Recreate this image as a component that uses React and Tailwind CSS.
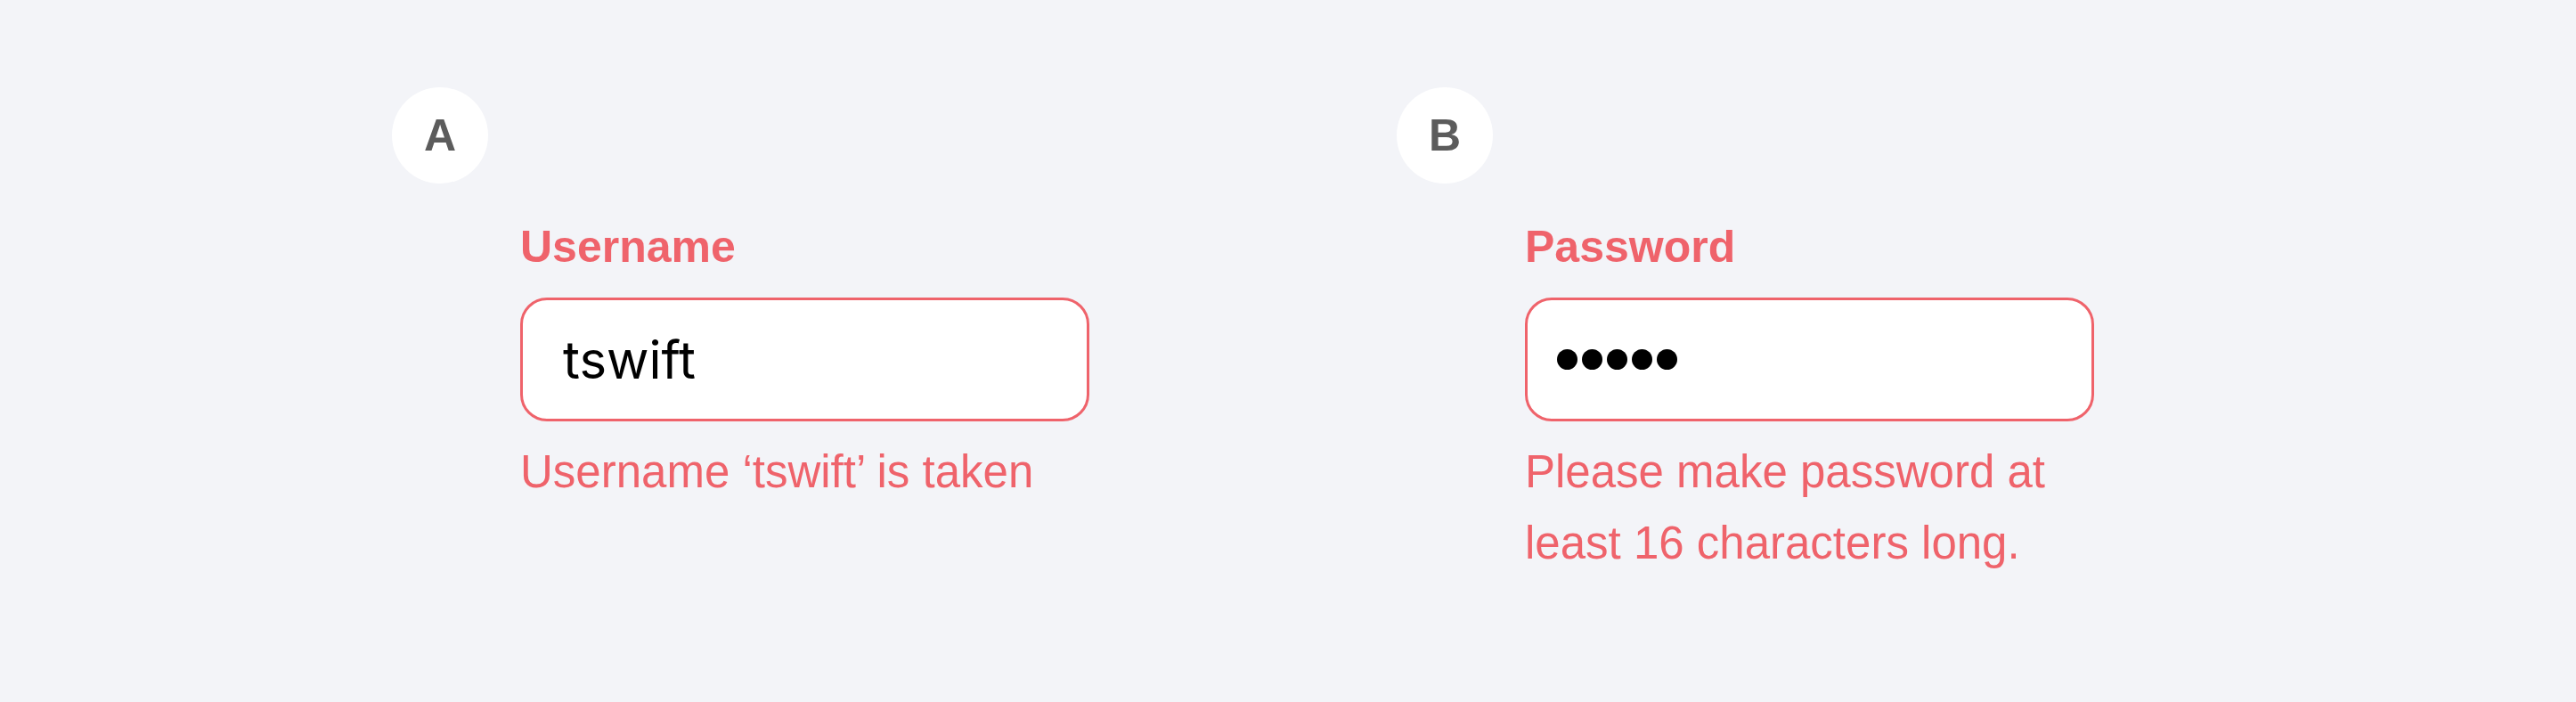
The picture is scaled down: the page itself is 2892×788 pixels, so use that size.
import React from 'react';

const sans = { fontFamily: '"Liberation Sans", Arial, sans-serif' };

function Badge({ letter }) {
  return (
    <div className="flex h-[108px] w-[108px] items-center justify-center rounded-full bg-white text-[50px] font-bold leading-none text-[#5c5c5c]">
      {letter}
    </div>
  );
}

function Field({ letter, label, children, hint, pad }) {
  return (
    <div className="flex w-[1128px] shrink-0 flex-col">
      <Badge letter={letter} />
      <div className="ml-[144px] mt-[46px] w-[639px]">
        <div className="text-[50px] font-bold leading-[50px] text-[#ef636b]">{label}</div>
        <div className={`mt-[32px] flex h-[139px] items-center rounded-[30px] border-[3px] border-[#ef636b] bg-white ${pad}`}>
          {children}
        </div>
        <p className="mt-[17px] text-[51px] leading-[80px] text-[#ef636b]">{hint}</p>
      </div>
    </div>
  );
}

export default function App() {
  return (
    <div className="flex h-[788px] w-full bg-[#f3f4f8] pl-[440px] pt-[98px]" style={sans}>
      <Field letter="A" label="Username" hint="Username ‘tswift’ is taken" pad="pl-[45px]">
        <span className="text-[58px] leading-none text-black" style={{ fontFamily: 'Inter, sans-serif' }}>
          tswift
        </span>
      </Field>
      <Field
        letter="B"
        label="Password"
        hint="Please make password at least 16 characters long."
        pad="pl-[33px]"
      >
        <div className="flex gap-[5px]">
          {[0, 1, 2, 3, 4].map((i) => (
            <div key={i} className="h-[23px] w-[23px] rounded-full bg-black" />
          ))}
        </div>
      </Field>
    </div>
  );
}
